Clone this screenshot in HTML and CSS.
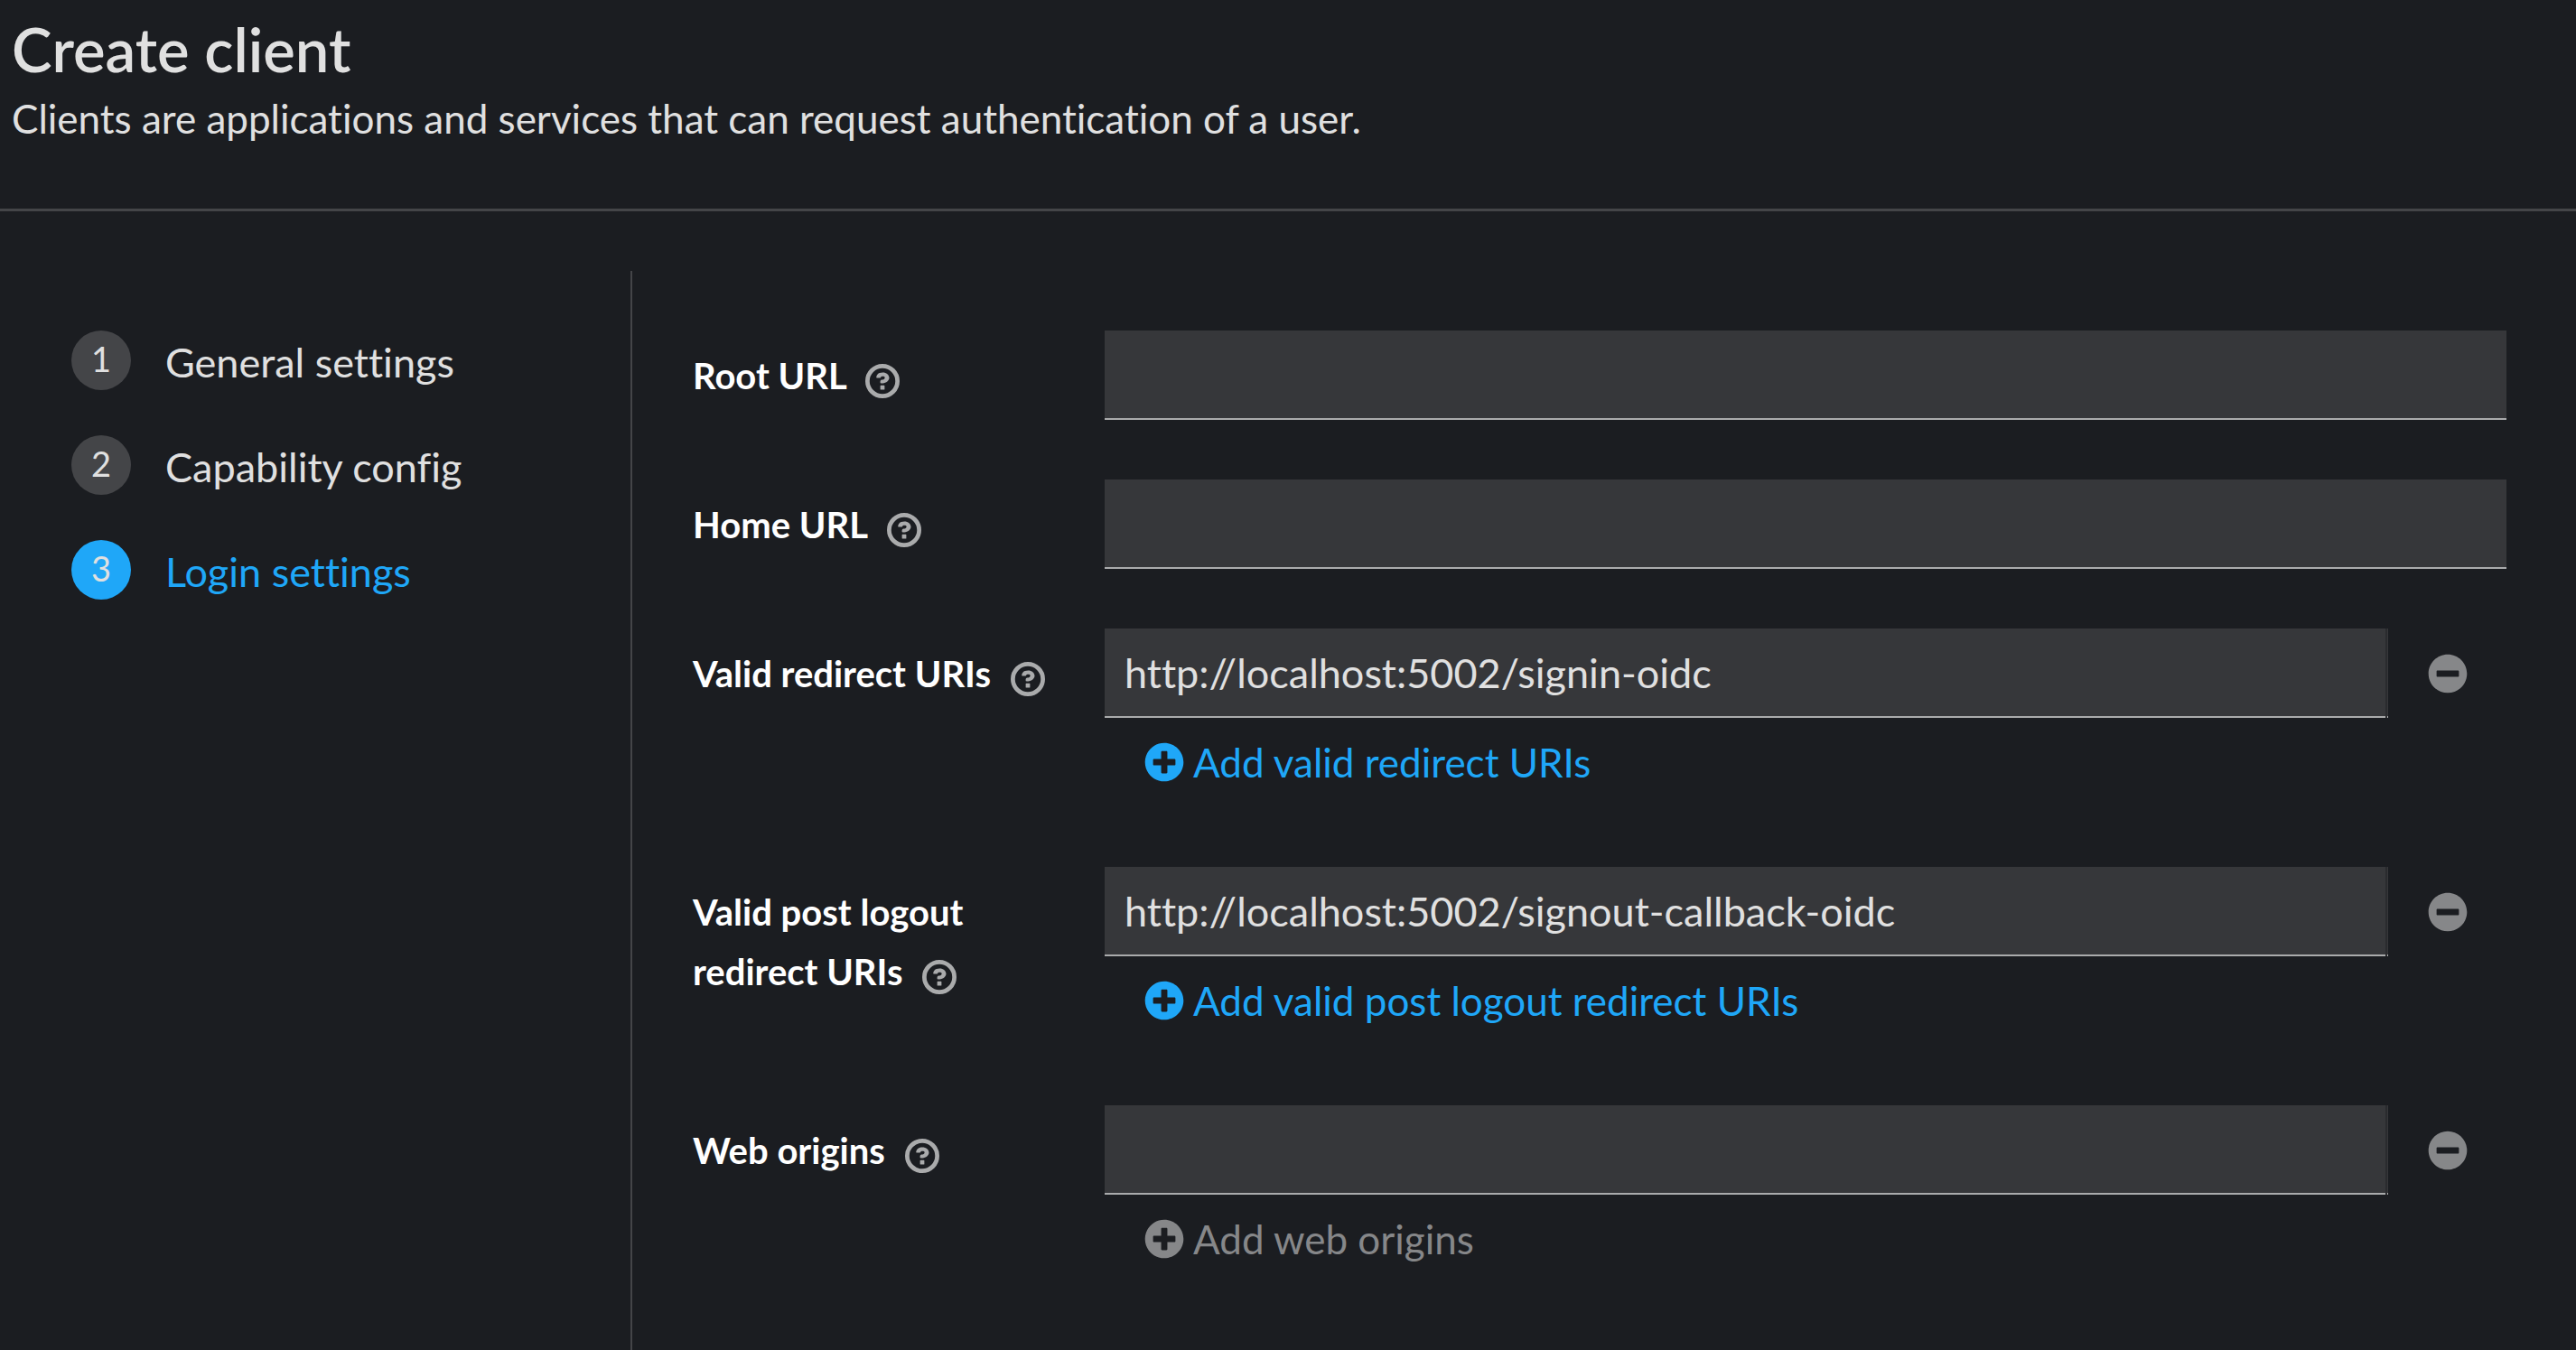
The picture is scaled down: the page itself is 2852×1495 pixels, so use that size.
FILE: index.html
```html
<!DOCTYPE html>
<html lang="en">
<head>
<meta charset="utf-8">
<meta name="viewport" content="width=device-width, initial-scale=1">
<title>Create client</title>
<link rel="stylesheet" href="styles.css">
</head>
<body>
<svg class="sprite" aria-hidden="true">
  <symbol id="icon-help" viewBox="0 0 1024 1024">
    <circle cx="512" cy="512" r="448" fill="none" stroke="currentColor" stroke-width="128"/>
    <path fill="currentColor" d="M521.3,576C627.5,576 713.7,499 713.7,413.7C713.7,325.6 627.6,253.6 521.3,253.6C366,253.6 334.5,337.7 329.2,407.2C329.2,414.3 335.2,416 343.5,416L445,416C450.5,416 458,415.5 460.8,406.5C460.8,362.6 582.9,357.1 582.9,413.6C582.9,441.9 556.2,470.9 521.3,473C486.4,475.1 447.3,479.8 447.3,521.7L447.3,553.8C447.3,570.8 456.1,576 472,576ZM464,640h96q16,0 16,16v96q0,16 -16,16h-96q-16,0 -16,-16v-96q0,-16 16,-16z"/>
  </symbol>
  <symbol id="icon-plus" viewBox="0 0 512 512">
    <path fill="currentColor" d="M256 8C119 8 8 119 8 256s111 248 248 248 248-111 248-248S393 8 256 8zm144 276c0 6.600-5.400 12-12 12h-92v92c0 6.600-5.400 12-12 12h-56c-6.600 0-12-5.400-12-12v-92h-92c-6.600 0-12-5.400-12-12v-56c0-6.600 5.400-12 12-12h92v-92c0-6.600 5.400-12 12-12h56c6.600 0 12 5.400 12 12v92h92c6.600 0 12 5.400 12 12v56z"/>
  </symbol>
  <symbol id="icon-minus" viewBox="0 0 512 512">
    <path fill="currentColor" d="M256 8C119 8 8 119 8 256s111 248 248 248 248-111 248-248S393 8 256 8zM124 296c-6.600 0-12-5.400-12-12v-56c0-6.600 5.400-12 12-12h264c6.600 0 12 5.400 12 12v56c0 6.600-5.400 12-12 12H124z"/>
  </symbol>
</svg>

<header class="page-header">
  <h1 class="page-title">Create client</h1>
  <p class="page-description">Clients are applications and services that can request authentication of a user.</p>
</header>

<main class="wizard">
  <nav class="wizard-nav" aria-label="Wizard steps">
    <ol class="steps">
      <li><button type="button" class="step"><span class="step-number">1</span>General settings</button></li>
      <li><button type="button" class="step"><span class="step-number">2</span>Capability config</button></li>
      <li><button type="button" class="step step-current" aria-current="step"><span class="step-number">3</span>Login settings</button></li>
    </ol>
  </nav>

  <form class="settings">
    <div class="field">
      <div class="field-label">
        <label for="root-url">Root URL</label>
        <button type="button" class="help" aria-label="Help for Root URL"><svg class="help-icon"><use href="#icon-help"/></svg></button>
      </div>
      <div class="field-control">
        <input class="text-input" id="root-url" type="text">
      </div>
    </div>

    <div class="field">
      <div class="field-label">
        <label for="home-url">Home URL</label>
        <button type="button" class="help" aria-label="Help for Home URL"><svg class="help-icon"><use href="#icon-help"/></svg></button>
      </div>
      <div class="field-control">
        <input class="text-input" id="home-url" type="text">
      </div>
    </div>

    <div class="field">
      <div class="field-label">
        <label for="redirect-uris">Valid redirect URIs</label>
        <button type="button" class="help" aria-label="Help for Valid redirect URIs"><svg class="help-icon"><use href="#icon-help"/></svg></button>
      </div>
      <div class="field-control">
        <div class="input-group">
          <input class="text-input" id="redirect-uris" type="text" value="http://localhost:5002/signin-oidc">
          <button type="button" class="remove" aria-label="Remove"><svg class="icon"><use href="#icon-minus"/></svg></button>
        </div>
        <button type="button" class="add"><svg class="icon"><use href="#icon-plus"/></svg>Add valid redirect URIs</button>
      </div>
    </div>

    <div class="field">
      <div class="field-label">
        <label for="logout-uris">Valid post logout redirect URIs</label>
        <button type="button" class="help" aria-label="Help for Valid post logout redirect URIs"><svg class="help-icon"><use href="#icon-help"/></svg></button>
      </div>
      <div class="field-control">
        <div class="input-group">
          <input class="text-input" id="logout-uris" type="text" value="http://localhost:5002/signout-callback-oidc">
          <button type="button" class="remove" aria-label="Remove"><svg class="icon"><use href="#icon-minus"/></svg></button>
        </div>
        <button type="button" class="add"><svg class="icon"><use href="#icon-plus"/></svg>Add valid post logout redirect URIs</button>
      </div>
    </div>

    <div class="field">
      <div class="field-label">
        <label for="web-origins">Web origins</label>
        <button type="button" class="help" aria-label="Help for Web origins"><svg class="help-icon"><use href="#icon-help"/></svg></button>
      </div>
      <div class="field-control">
        <div class="input-group">
          <input class="text-input" id="web-origins" type="text">
          <button type="button" class="remove" aria-label="Remove"><svg class="icon"><use href="#icon-minus"/></svg></button>
        </div>
        <button type="button" class="add" disabled><svg class="icon"><use href="#icon-plus"/></svg>Add web origins</button>
      </div>
    </div>
  </form>
</main>
</body>
</html>
```
FILE: styles.css
```css
:root {
  --bg: #1b1d21;
  --field: #36373a;
  --field-edge: #2a2b2e;
  --line: #444548;
  --text: #e0e0e0;
  --muted: #868789;
  --subtle: #aaabac;
  --accent: #1fa7f8;
}

* {
  box-sizing: border-box;
}

body {
  display: flex;
  flex-direction: column;
  min-height: 100vh;
  margin: 0;
  background: var(--bg);
  color: var(--text);
  font-family: Lato, "Liberation Sans", sans-serif;
  font-size: 44px;
  font-variant-ligatures: none;
  line-height: 66px;
}

button,
input {
  margin: 0;
  padding: 0;
  border: 0;
  border-radius: 0;
  background: none;
  color: inherit;
  font: inherit;
  font-variant-ligatures: none;
}

.sprite {
  position: absolute;
  width: 0;
  height: 0;
}

.page-header {
  padding: 10px 13px 67px;
  border-bottom: 3px solid var(--line);
}

.page-title {
  margin: 0;
  font-size: 67px;
  font-weight: 600;
  line-height: 88px;
}

.page-description {
  margin: 0;
}

.wizard {
  display: flex;
  flex: 1;
  padding-top: 66px;
}

.wizard-nav {
  flex: none;
  width: 700px;
  padding: 66px 44px 66px 79px;
  border-right: 2px solid var(--line);
}

.steps {
  display: flex;
  flex-direction: column;
  gap: 46px;
  margin: 0;
  padding: 0;
  list-style: none;
}

.step {
  display: flex;
  gap: 38px;
  font-size: 45px;
  line-height: 70px;
  text-align: left;
}

.step-number {
  flex: none;
  width: 66px;
  height: 66px;
  border-radius: 50%;
  background: var(--line);
  font-size: 38px;
  line-height: 62px;
  text-align: center;
}

.step-current {
  color: var(--accent);
}

.step-current .step-number {
  background: var(--accent);
  color: var(--text);
}

.settings {
  display: flex;
  flex: 1;
  flex-direction: column;
  gap: 66px;
  min-width: 0;
  padding: 66px 77px 66px 67px;
}

.field {
  display: grid;
  grid-template-columns: 412px minmax(0, 1fr);
  column-gap: 44px;
}

.field-label {
  padding-top: 17px;
  color: #fff;
  font-size: 40px;
  font-weight: 700;
}

.help {
  margin-left: 12px;
  color: var(--subtle);
  line-height: 38px;
  vertical-align: -10px;
}

.help-icon {
  display: block;
  width: 38px;
  height: 38px;
}

.input-group {
  display: flex;
}

.text-input {
  flex: 1;
  width: 100%;
  min-width: 0;
  height: 99px;
  padding: 0 22px;
  border-bottom: 2px solid var(--subtle);
  background: var(--field);
  font-size: 45px;
}

.remove {
  padding: 0 43px 0 47px;
  background:
    linear-gradient(var(--subtle), var(--subtle)) 2px 100% / 1px 2px no-repeat,
    linear-gradient(var(--field), var(--field)) 2px 0 / 1px 100% no-repeat,
    linear-gradient(var(--field-edge), var(--field-edge)) 0 0 / 2px 100% no-repeat;
  color: var(--muted);
}

.icon {
  display: block;
  flex: none;
  width: 44px;
  height: 44px;
}

.add {
  display: flex;
  align-items: center;
  gap: 10px;
  height: 98px;
  margin-bottom: 1px;
  padding: 0 44px;
  color: var(--accent);
}

.add:disabled {
  color: var(--muted);
}
```
